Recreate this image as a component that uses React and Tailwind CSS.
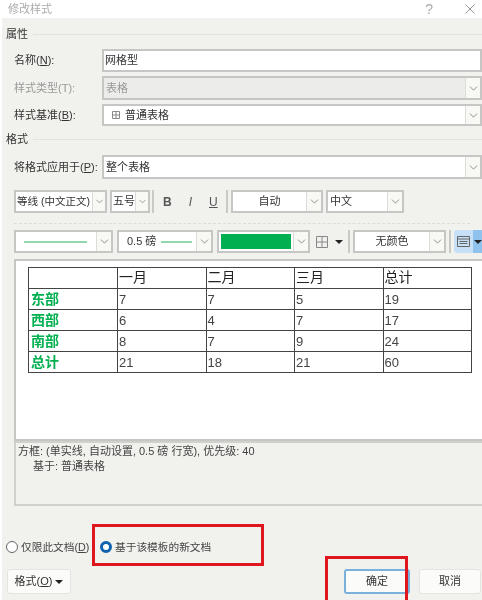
import { ChevronDown } from 'lucide-react';

const months = ['一月', '二月', '三月', '总计'];
const rows = [
  ['东部', '7', '7', '5', '19'],
  ['西部', '6', '4', '7', '17'],
  ['南部', '8', '7', '9', '24'],
  ['总计', '21', '18', '21', '60'],
];

function Caret() {
  return <span className="w-0 h-0 border-x-[4px] border-x-transparent border-t-[4px] border-t-[#222]" />;
}

function Chevron({ narrow }) {
  return (
    <span className={`${narrow ? 'w-[13px]' : 'w-[15px]'} h-full shrink-0 flex items-center justify-center bg-[#f8f8f4] border-l border-[#dcdcd8]`}>
      <ChevronDown size={narrow ? 11 : 13} strokeWidth={1.5} className="text-[#777]" />
    </span>
  );
}

function Select({ className, children, disabled, narrow }) {
  return (
    <div className={`flex items-stretch border-2 border-[#c6c6c4] ${disabled ? 'bg-[#ececea]' : 'bg-white'} ${className}`}>
      <div className="flex-1 min-w-0 flex items-center overflow-hidden whitespace-nowrap">{children}</div>
      <Chevron narrow={narrow} />
    </div>
  );
}

function Section({ title, className }) {
  return (
    <div className={`flex items-center gap-[5px] pl-[6px] h-[18px] ${className}`}>
      <span className="text-[11px] text-[#333]">{title}</span>
      <div className="flex-1 border-t border-[#e2e2de]" />
    </div>
  );
}

function Row({ label, disabled, className, children }) {
  return (
    <div className={`flex items-stretch pl-[14px] ${className}`}>
      <span className={`w-[88px] shrink-0 flex items-center whitespace-nowrap text-[11px] ${disabled ? 'text-[#999]' : 'text-[#333]'}`}>
        <span>{label}</span>
      </span>
      {children}
    </div>
  );
}

function Sep({ className }) {
  return <div className={`w-[2px] self-stretch bg-[#c9c9c6] ${className}`} />;
}

function Radio({ checked }) {
  return checked ? (
    <span className="w-[12px] h-[12px] rounded-full border-[3px] border-[#0f62ad] bg-white shrink-0" />
  ) : (
    <span className="w-[12px] h-[12px] rounded-full border border-[#666] bg-white shrink-0" />
  );
}

export default function App() {
  return (
    <div
      className="relative w-[482px] h-[600px] overflow-hidden bg-[#f1f1ed] text-[#333] border-l-2 border-white blur-[0.3px]"
      style={{ fontFamily: '"Liberation Sans", "Noto Sans CJK SC", sans-serif' }}
    >
      {/* title bar */}
      <div className="h-[18px] bg-white flex items-center pl-[6px] text-[11px] text-[#aaa]">
        <span className="flex-1">修改样式</span>
        <span className="text-[14px] mr-[32px]">?</span>
        <svg width="10" height="10" viewBox="0 0 10 10" className="mr-[7px] text-[#999]" stroke="currentColor" fill="none">
          <path d="M0.5 0.5 L9.5 9.5 M9.5 0.5 L0.5 9.5" />
        </svg>
      </div>

      <Section title="属性" className="mt-[7px] -ml-[2px]" />

      <Row label={<>名称(<u>N</u>):</>} className="mt-[6px] h-[23px] -ml-[2px]">
        <div className="flex-1 border-2 border-[#c6c6c4] bg-white flex items-center pl-[1px] text-[11px]">网格型</div>
      </Row>
      <Row label="样式类型(T):" disabled className="mt-[4px] h-[24px] -ml-[2px]">
        <Select disabled className="flex-1 text-[11px] text-[#999]"><span className="pl-[2px]">表格</span></Select>
      </Row>
      <Row label={<>样式基准(<u>B</u>):</>} className="mt-[4px] h-[22px] -ml-[2px]">
        <Select className="flex-1 text-[11px]">
          <span className="pl-[8px] flex items-center gap-[5px]">
            <svg width="8" height="8" viewBox="0 0 8 8" fill="none" stroke="#888"><path d="M.5.5h7v7h-7z M4 .5v7 M.5 4h7" /></svg>
            普通表格
          </span>
        </Select>
      </Row>

      <Section title="格式" className="mt-[4px] -ml-[2px]" />

      <Row label={<>将格式应用于(<u>P</u>):</>} className="mt-[7px] h-[24px] -ml-[2px]">
        <Select className="flex-1 text-[11px]"><span className="pl-[2px]">整个表格</span></Select>
      </Row>

      {/* font row */}
      <div className="flex items-stretch h-[23px] mt-[11px] pl-[12px] text-[11px]">
        <Select narrow className="w-[93px]"><span className="pl-[1px] text-[10.5px]">等线 (中文正文)</span></Select>
        <Select narrow className="w-[40px] ml-[3px]"><span className="pl-[1px]">五号</span></Select>
        <Sep className="ml-[2px]" />
        <div className="w-[72px] flex items-center text-[#555] text-[12px]">
          <span className="ml-[9px] font-bold">B</span>
          <span className="ml-[17px] italic">I</span>
          <span className="ml-[17px] underline">U</span>
        </div>
        <Sep />
        <Select className="w-[92px] ml-[3px]"><span className="w-full text-center">自动</span></Select>
        <Select className="w-[78px] ml-[3px]"><span className="pl-[2px]">中文</span></Select>
      </div>

      <div className="mt-[10px] mx-[12px] border-t border-dashed border-[#dcdcd8]" />

      {/* border row */}
      <div className="flex items-stretch h-[23px] mt-[6px] pl-[12px] text-[11px]">
        <Select className="w-[99px]"><span className="ml-[8px] w-[63px] h-[2px] bg-[#8fd8b0]" /></Select>
        <Select className="w-[96px] ml-[4px]">
          <span className="pl-[8px] flex items-center gap-[5px]">0.5 磅<span className="w-[31px] h-[2px] bg-[#8fd8b0]" /></span>
        </Select>
        <Select className="w-[93px] ml-[4px]"><span className="h-full w-full border-2 border-white bg-[#00b050]" /></Select>
        <div className="w-[38px] flex items-center">
          <svg width="12" height="12" viewBox="0 0 12 12" fill="none" stroke="#888" className="ml-[6px]"><path d="M.5.5h11v11h-11z M6 .5v11 M.5 6h11" /></svg>
          <span className="ml-[7px] flex"><Caret /></span>
        </div>
        <Sep />
        <Select className="w-[93px] ml-[3px]"><span className="w-full text-center">无颜色</span></Select>
        <Sep className="ml-[3px]" />
        <div className="ml-[3px] flex-1 flex items-stretch bg-[#c5e0f7] rounded-l-[3px]">
          <span className="w-[19px] flex items-center justify-center">
            <svg width="13" height="11" viewBox="0 0 13 11" fill="none" stroke="#666"><path d="M.5.5h12v10H.5z M.5 3h12 M2.5 5.5h8 M2.5 7.5h8" /></svg>
          </span>
          <span className="flex-1 bg-[#8fc3ee] flex items-center justify-center"><Caret /></span>
        </div>
      </div>

      {/* preview */}
      <div className="mt-[6px] ml-[12px] h-[182px] bg-white border-2 border-r-0 border-[#c6c6c4] pt-[6px] pl-[12px]">
        <table className="w-[444px] table-fixed border-collapse text-[13px] text-[#444]">
          <tbody>
            <tr className="h-[21px]">
              <td className="border border-[#444] w-[89px]" />
              {months.map((m) => (
                <td key={m} className="border border-[#444] pl-[1px] pb-[2px] leading-none text-[14px] text-[#222]">{m}</td>
              ))}
            </tr>
            {rows.map((r) => (
              <tr key={r[0]} className="h-[21px]">
                <td className="border border-[#444] pl-[2px] pb-[2px] leading-none font-bold text-[#00b050] text-[14px]" style={{ fontFamily: '"Noto Sans CJK SC", sans-serif' }}>{r[0]}</td>
                {r.slice(1).map((v, i) => (
                  <td key={i} className="border border-[#444] pl-[1px] leading-none">{v}</td>
                ))}
              </tr>
            ))}
          </tbody>
        </table>
      </div>

      {/* description */}
      <div className="ml-[12px] h-[65px] border-2 border-r-0 border-[#d0d0cc] pl-[2px] pt-[1px] text-[11px] leading-[15px] text-[#444]">
        <div>方框: (单实线, 自动设置, 0.5 磅 行宽), 优先级: 40</div>
        <div className="pl-[15px]">基于: 普通表格</div>
      </div>

      {/* radios */}
      <div className="mt-[34px] -ml-[2px] flex items-center h-[14px] pl-[6px] text-[10.7px] text-[#444]">
        <Radio />
        <span className="ml-[3px] w-[70px] whitespace-nowrap">仅限此文档(<u>D</u>)</span>
        <span className="ml-[9px] flex items-center gap-[3px]"><Radio checked />基于该模板的新文档</span>
      </div>

      {/* buttons */}
      <div className="mt-[15px] -ml-[2px] flex h-[25px] text-[11px]">
        <div className="ml-[7px] w-[64px] flex items-center justify-center gap-[3px] rounded-[3px] bg-[#fbfbf9] border border-[#e4e4e0]">
          <span>格式(<u>O</u>)</span><Caret />
        </div>
        <div className="ml-[273px] w-[66px] flex items-center justify-center rounded-[3px] bg-[#fbfbf9] border-2 border-[#7ab0dc]">确定</div>
        <div className="ml-[9px] w-[62px] flex items-center justify-center rounded-[3px] bg-[#fbfbf9] border border-[#e4e4e0]">取消</div>
      </div>

      {/* red annotation boxes */}
      <div className="absolute left-[90px] top-[524px] w-[172px] h-[42px] border-[3px] border-[#e0161e]" />
      <div className="absolute left-[323px] top-[556px] w-[83px] h-[50px] border-[3px] border-[#e0161e]" />
    </div>
  );
}
